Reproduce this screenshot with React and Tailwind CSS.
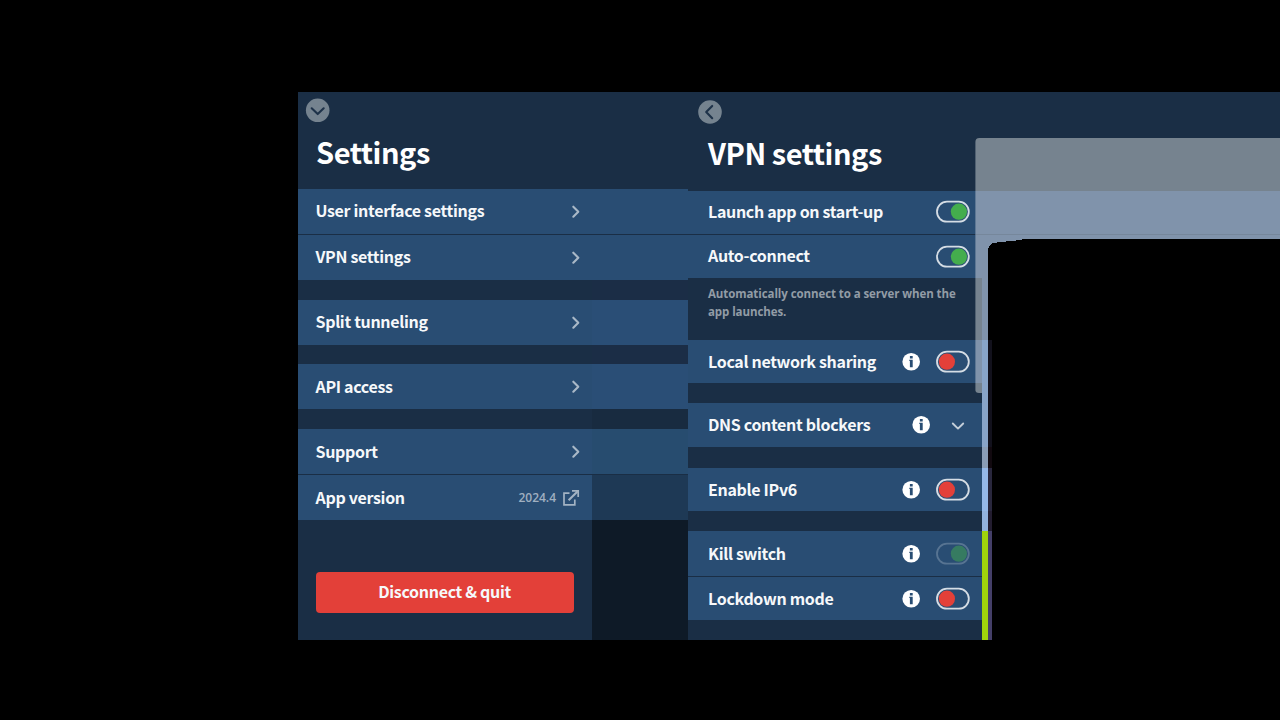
import React from 'react';

const heading = "font-['Noto_Sans_CJK_SC',sans-serif] font-bold text-white whitespace-nowrap text-[29px] leading-10 tracking-[-0.45px]";
const label = "font-['Noto_Sans_CJK_SC',sans-serif] font-bold text-[#f6f8fa] whitespace-nowrap text-[16px] leading-6 tracking-[-0.32px]";

function ChevronRight() {
  return (
    <svg width="10" height="14" viewBox="0 0 10 14" fill="none" stroke="#a9b8c7" strokeWidth="2.1" strokeLinecap="round" strokeLinejoin="round">
      <path d="M2.3 1.7l5 5-5 5" />
    </svg>
  );
}

function ExternalLink() {
  return (
    <svg width="18" height="18" viewBox="0 0 18 18" fill="none" stroke="#a3b3c3" strokeWidth="1.7">
      <path d="M7.5 4.2H2v11.6h10.8V10.5" />
      <path d="M10 1.9h6.2V8" />
      <path d="M16 2L6.6 11.2" strokeWidth="2.1" />
    </svg>
  );
}

function CircleButton({ direction }) {
  const down = direction === 'down';
  return (
    <svg className="block overflow-visible" width="24" height="24" viewBox="0 0 24 24" fill="none">
      <g transform={down ? 'translate(-0.3 0.3)' : undefined}>
        <circle cx="12" cy="12" r="11.8" fill="#75838f" />
        <path
          d={down ? 'M6 10l6 5.8 6-5.8' : 'M14.2 5.9L8.2 12l6 6.2'}
          stroke="#1e3249" strokeWidth="2.1" strokeLinecap="round" strokeLinejoin="round"
        />
      </g>
    </svg>
  );
}

function Info() {
  return (
    <svg width="18" height="18" viewBox="0 0.2 18 18">
      <circle cx="9.2" cy="9" r="8.8" fill="#fff" />
      <path d="M7.9 3.2h2.8v2.5H7.9zM7.3 6.9h3.4v7.5H7.9V8.2H7.3z" fill="#294d73" />
    </svg>
  );
}

function Toggle({ on, dim }) {
  return (
    <svg className="block overflow-visible" width="34" height="22" viewBox="0 0.3 34 22">
      <rect x="1" y="1" width="31.8" height="20" rx="10" fill="none" stroke="#d5dde5" strokeWidth="1.8" strokeOpacity={dim ? 0.27 : 1} />
      <circle cx={on ? 22.9 : 10.9} cy="11" r="8.1" fill={on ? '#44ad4d' : '#e34039'} fillOpacity={dim ? 0.48 : 1} />
    </svg>
  );
}

function NavRow({ text, tail, lift = 'mb-[2px]', children }) {
  return (
    <div className="flex h-[45px]">
      <div className="flex w-[294px] items-center justify-between bg-[#294d73] pl-[17.5px] pr-[11px]">
        <span className={`${label} ${lift}`}>{text}</span>
        {children || <ChevronRight />}
      </div>
      <div className={`w-24 ${tail}`} />
    </div>
  );
}

function Gap({ height, tail }) {
  return (
    <div className={`flex ${height}`}>
      <div className="w-[294px]" />
      <div className={`w-24 ${tail}`} />
    </div>
  );
}

function SettingRow({ text, className, info, lift = 'mb-[2px]', children }) {
  return (
    <div className={`bg-[#294d73] ${className}`}>
      <div className="flex h-full w-[294px] items-center pl-5 pr-3">
        <span className={`${label} ${lift} grow`}>{text}</span>
        {info && <Info />}
        {children}
      </div>
    </div>
  );
}

function ScrollOverlay() {
  return (
    <svg className="absolute left-[287px] top-0" width="305" height="548" viewBox="-1 0 305 548" shapeRendering="crispEdges">
      <path d="M-0.6 99V50Q-0.6 46 3.4 46H304V99Z" fill="#76838f" shapeRendering="auto" />
      <rect x="-0.6" y="99" width="304.6" height="87" fill="#8093ab" shapeRendering="auto" />
      <rect x="0" y="142" width="304" height="1" fill="#76879b" />
      <rect x="-0.6" y="186" width="6.6" height="62" fill="#76838f" shapeRendering="auto" />
      <rect x="-0.6" y="248" width="6.6" height="43" fill="#8093ab" shapeRendering="auto" />
      <path d="M-0.6 291H6V301H3Q-0.6 301 -0.6 298Z" fill="#76838f" shapeRendering="auto" />
      <rect x="6" y="186" width="6" height="62" fill="#8093ab" />
      <path d="M12 548V158L13 154L16 151L25 150L35 149L46 148V147H304V548Z" fill="#000" />
      <rect x="6" y="248" width="6" height="107" fill="#88a4c8" />
      <rect x="6" y="355" width="6" height="21" fill="#8a9db6" />
      <rect x="6" y="376" width="6" height="43" fill="#95b8e8" />
      <rect x="6" y="419" width="6" height="20" fill="#92b2de" />
      <rect x="6" y="439" width="6" height="109" fill="#a0d40b" />
      <rect x="12" y="248" width="4" height="107" fill="#12111c" />
      <rect x="12" y="355" width="4" height="21" fill="#11090f" />
      <rect x="12" y="376" width="4" height="43" fill="#29273d" />
      <rect x="12" y="419" width="4" height="20" fill="#231d30" />
      <rect x="12" y="439" width="4" height="109" fill="#443f68" />
    </svg>
  );
}

export default function App() {
  return (
    <div className="flex h-[720px] w-[1280px] overflow-hidden bg-black pb-20 pl-[298px] pt-[92px]">
      <section className="flex h-[548px] w-[390px] shrink-0 flex-col bg-[#1a2e45]">
        <div className="h-[97px] shrink-0 pl-2 pt-[6px]">
          <CircleButton direction="down" />
          <h1 className={`${heading} ml-[10px] mt-[9px]`}>Settings</h1>
        </div>
        <NavRow text="User interface settings" tail="bg-[#294d73]" lift="mb-1" />
        <div className="h-px shrink-0" />
        <NavRow text="VPN settings" tail="bg-[#294d73]" lift="mb-1" />
        <Gap height="h-5" tail="bg-[#1b2d46]" />
        <NavRow text="Split tunneling" tail="bg-[#2a4e76]" lift="mb-1" />
        <Gap height="h-[19px]" tail="bg-[#1b2d46]" />
        <NavRow text="API access" tail="bg-[#2a4e76]" />
        <Gap height="h-5" tail="bg-[#182b40]" />
        <NavRow text="Support" tail="bg-[#274c6f]" />
        <div className="h-px shrink-0" />
        <NavRow text="App version" tail="bg-[#1e3955]">
          <span className="flex items-center gap-[6px] pr-px">
            <span className="font-['Open_Sans',sans-serif] text-[12px] font-semibold leading-4 text-[#a0b0c1]">2024.4</span>
            <ExternalLink />
          </span>
        </NavRow>
        <div className="flex grow">
          <div className="w-[294px] pl-[17.6px] pt-[51.6px]">
            <button className="flex h-[41px] w-[258px] items-center justify-center rounded bg-[#e34039]">
              <span className={`${label} mb-[3px]`}>Disconnect &amp; quit</span>
            </button>
          </div>
          <div className="w-24 bg-[#0e1a27]" />
        </div>
      </section>

      <section className="relative flex h-[548px] w-[592px] shrink-0 flex-col bg-[#1a2e45]">
        <div className="h-[99px] shrink-0 pl-[10px] pt-2">
          <CircleButton direction="left" />
          <h2 className={`${heading} ml-[10px] mt-2`}>VPN settings</h2>
        </div>
        <SettingRow text="Launch app on start-up" className="h-[43px]" lift="mb-1">
          <span className="mb-0.5"><Toggle on /></span>
        </SettingRow>
        <div className="h-px shrink-0" />
        <SettingRow text="Auto-connect" className="h-[43px]" lift="mb-1"><Toggle on /></SettingRow>
        <p className="h-[62px] w-[294px] shrink-0 whitespace-nowrap pl-5 pt-[7px] font-['Open_Sans',sans-serif] text-[11.5px] font-bold leading-[18px] tracking-[-0.08px] text-[#929ca6]">
          Automatically connect to a server when the<br />app launches.
        </p>
        <SettingRow text="Local network sharing" className="mb-5 h-[43px]" info>
          <span className="ml-4"><Toggle /></span>
        </SettingRow>
        <SettingRow text="DNS content blockers" className="mb-[21px] h-11" info>
          <svg className="ml-[21px] mr-[5px] mt-0.5" width="14" height="10" viewBox="0 0 14 10" fill="none" stroke="#c3ced9" strokeWidth="1.9" strokeLinecap="round" strokeLinejoin="round">
            <path d="M1.8 2.5L7 7.6l5.2-5.1" />
          </svg>
        </SettingRow>
        <SettingRow text="Enable IPv6" className="mb-5 h-[43px]" info>
          <span className="ml-4"><Toggle /></span>
        </SettingRow>
        <SettingRow text="Kill switch" className="mb-px h-[45px]" info>
          <span className="ml-4"><Toggle on dim /></span>
        </SettingRow>
        <SettingRow text="Lockdown mode" className="h-[43px]" info>
          <span className="ml-4"><Toggle /></span>
        </SettingRow>
        <ScrollOverlay />
      </section>
    </div>
  );
}
